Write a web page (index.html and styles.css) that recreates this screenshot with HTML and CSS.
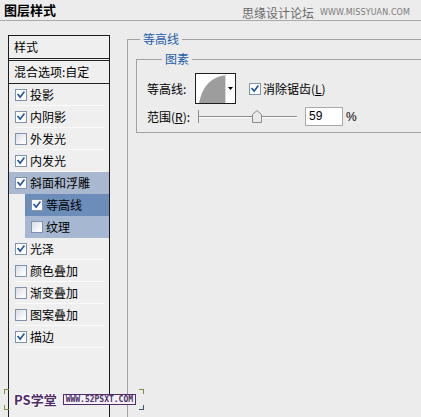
FILE: index.html
```html
<!DOCTYPE html>
<html lang="zh-CN">
<head>
<meta charset="utf-8">
<title>图层样式</title>
<link rel="stylesheet" href="styles.css">
</head>
<body>
<div class="window">
  <header class="titlebar">
    <h1 class="title">图层样式</h1>
    <div class="wm">思缘设计论坛<span class="wm-url">WWW.MISSYUAN.COM</span></div>
  </header>
  <div class="main">
    <aside class="panel">
      <div class="panel-head">样式</div>
      <div class="panel-blend">混合选项:自定</div>
      <ul class="items">
        <li class="item"><span class="cb on"><svg viewBox="0 0 12 12"><path d="M2.5 5.5 L5 8.5 L9.5 2.5"/></svg></span>投影</li>
        <li class="item"><span class="cb on"><svg viewBox="0 0 12 12"><path d="M2.5 5.5 L5 8.5 L9.5 2.5"/></svg></span>内阴影</li>
        <li class="item"><span class="cb"></span>外发光</li>
        <li class="item"><span class="cb on"><svg viewBox="0 0 12 12"><path d="M2.5 5.5 L5 8.5 L9.5 2.5"/></svg></span>内发光</li>
        <li class="item sel"><span class="cb on"><svg viewBox="0 0 12 12"><path d="M2.5 5.5 L5 8.5 L9.5 2.5"/></svg></span>斜面和浮雕</li>
        <li class="item sub active"><span class="cb on"><svg viewBox="0 0 12 12"><path d="M2.5 5.5 L5 8.5 L9.5 2.5"/></svg></span>等高线</li>
        <li class="item sub"><span class="cb"></span>纹理</li>
        <li class="item"><span class="cb on"><svg viewBox="0 0 12 12"><path d="M2.5 5.5 L5 8.5 L9.5 2.5"/></svg></span>光泽</li>
        <li class="item"><span class="cb"></span>颜色叠加</li>
        <li class="item"><span class="cb"></span>渐变叠加</li>
        <li class="item"><span class="cb"></span>图案叠加</li>
        <li class="item"><span class="cb on"><svg viewBox="0 0 12 12"><path d="M2.5 5.5 L5 8.5 L9.5 2.5"/></svg></span>描边</li>
      </ul>
    </aside>
    <section class="content">
      <fieldset class="group outer">
        <legend>等高线</legend>
        <fieldset class="group inner">
          <legend>图素</legend>
          <div class="row row-contour">
            <span class="label">等高线:</span>
            <span class="contour">
              <svg width="41" height="31" viewBox="0 0 41 31">
                <rect x="0.5" y="0.5" width="40" height="30" fill="#fff" stroke="#1e1e1e"/>
                <path d="M4 30 C 7 16, 13 6, 28 2.5 L 30 2.5 L 30 30 Z" fill="#9d9d9d"/>
                <line x1="30.5" y1="1" x2="30.5" y2="30" stroke="#d8d8d8"/>
                <path d="M33 14 L38 14 L35.5 17 Z" fill="#000"/>
              </svg>
            </span>
            <span class="cb on big"><svg viewBox="0 0 12 12"><path d="M2.5 5.5 L5 8.5 L9.5 2.5"/></svg></span>
            <span class="aa">消除锯齿(<u>L</u>)</span>
          </div>
          <div class="row row-range">
            <span class="label">范围(<u>R</u>):</span>
            <div class="track">
              <span class="thumb"><svg width="10" height="13" viewBox="0 0 10 13"><path d="M0.5 12.5 V4.5 L5 0.5 L9.5 4.5 V12.5 Z" fill="#ebebeb" stroke="#8a8a8a"/></svg></span>
            </div>
            <span class="num">59</span>
            <span class="pct">%</span>
          </div>
        </fieldset>
      </fieldset>
    </section>
  </div>
  <div class="foot-wm"><span class="ps">PS学堂</span><span class="ps-url">WWW.52PSXT.COM</span></div>
  <span class="mark mark-a"></span>
  <span class="mark mark-b"></span>
  <span class="mark mark-c"></span>
  <span class="mark mark-d"></span>
</div>
</body>
</html>
```
FILE: styles.css
```css
* { box-sizing: border-box; }
html, body { margin: 0; padding: 0; }
body {
  background: #ececec;
  font-family: "Noto Sans CJK SC", "Noto Sans", sans-serif;
  font-size: 12px;
  color: #000;
  width: 421px;
  height: 417px;
  overflow: hidden;
}
.window { position: relative; width: 421px; height: 417px; overflow: hidden; }

.titlebar {
  height: 21px;
  border-bottom: 1px solid #a9a9a9;
  display: flex;
  justify-content: space-between;
  align-items: flex-start;
  padding: 0 11px 0 4px;
}
.title {
  margin: 2px 0 0;
  font-size: 13px;
  line-height: 15px;
  font-weight: bold;
}
.wm {
  margin-top: 6px;
  color: #6a6a6a;
  font-size: 12px;
  line-height: 14px;
  display: flex;
  align-items: center;
  gap: 6px;
}
.wm-url {
  font-family: "DejaVu Sans", sans-serif;
  font-size: 8px;
  color: #7a7a7a;
  letter-spacing: 0.1px;
}

.main { display: flex; align-items: flex-start; padding-left: 8px; }

.panel {
  width: 102px;
  height: 420px;
  margin-top: 14px;
  border: 1px solid #1c1c1c;
  background: #efefef;
  flex: none;
}
.panel-head {
  height: 25px;
  line-height: 22px;
  padding-left: 5px;
  border-bottom: 3px double #222;
}
.panel-blend {
  height: 23px;
  line-height: 22px;
  padding-left: 5px;
  border-bottom: 1px solid #222;
}
.items { list-style: none; margin: 0; padding: 0; }
.item {
  position: relative;
  height: 22px;
  display: flex;
  align-items: center;
  gap: 3px;
  padding-left: 6px;
  line-height: 14px;
}
.item::after {
  content: "";
  position: absolute;
  left: 6px;
  right: 4px;
  bottom: 0;
  height: 1px;
  background: #fbfbfb;
}
.item.sel { background: #a9b8ce; }
.item.sub { margin-left: 16px; background: #a6b8d1; }
.item.sub.active { background: #6c8cba; }
.item.sel::after, .item.sub::after { display: none; }

.cb {
  width: 12px;
  height: 12px;
  flex: none;
  border: 1px solid #7f93ad;
  background: linear-gradient(135deg, #d9dde4 0%, #f7f8fa 70%, #ffffff 100%);
  display: inline-block;
}
.cb svg { display: block; width: 10px; height: 10px; }
.cb svg path { fill: none; stroke: #2a5aa5; stroke-width: 2; stroke-linecap: square; }
.cb.on { background: #fff; }

.content { flex: 1; margin-left: 17px; margin-top: 11px; margin-right: -14px; }
.group {
  margin: 0;
  padding: 0;
  min-width: 0;
  border: 1px solid #a3a3a3;
}
.group > legend {
  color: #1d5ea8;
  font-size: 12px;
  line-height: 14px;
  padding: 0 3px;
  margin-left: 12px;
}
.outer { height: 420px; }
.inner {
  margin: 6px 0 0 8px;
  height: 81px;
  padding: 0 0 0 10px;
}
.inner > legend { margin-left: 15px; }

.row { display: flex; align-items: center; }
.row-contour { margin-top: 7px; height: 31px; }
.row-contour .label { width: 48px; }
.contour { width: 41px; height: 31px; flex: none; }
.contour svg { display: block; }
.cb.big { margin-left: 13px; margin-right: 2px; }
.aa { line-height: 14px; }
u { text-decoration: underline; }

.row-range { margin-top: 3px; height: 19px; }
.row-range .label { width: 51px; }
.track {
  position: relative;
  width: 99px;
  height: 13px;
  background: linear-gradient(#0000 6px, #8c8c8c 6px, #8c8c8c 7px, #fff 7px, #fff 8px, #0000 8px);
  border-left: 1px solid #8c8c8c;
  flex: none;
}
.thumb { position: absolute; left: 53px; top: 0; }
.thumb svg { display: block; }
.num {
  margin-left: 8px;
  width: 38px;
  height: 19px;
  border: 1px solid #a9a9a9;
  background: #fff;
  padding-left: 3px;
  line-height: 17px;
  font-family: "Liberation Sans", sans-serif;
  font-size: 12px;
}
.pct { margin-left: 3px; font-family: "Liberation Sans", sans-serif; }

.foot-wm {
  position: absolute;
  left: 14px;
  top: 392px;
  display: flex;
  align-items: center;
  gap: 6px;
}
.ps {
  font-size: 13px;
  line-height: 15px;
  font-weight: bold;
  color: #4e2d69;
  text-shadow: 1px 0 #fff, -1px 0 #fff, 0 1px #fff, 0 -1px #fff;
}
.ps-url {
  font-family: "DejaVu Sans Mono", monospace;
  font-size: 8px;
  line-height: 9px;
  font-weight: bold;
  color: #4e2d69;
  background: #f4f0f6;
  border: 1px solid #4e2d69;
  padding: 0 2px;
}
.mark {
  position: absolute;
  width: 5px;
  height: 5px;
  border: 1px solid #7f8f3a;
}
.mark-a { left: 4px; top: 389px; border-right: 0; border-bottom: 0; }
.mark-b { left: 4px; top: 405px; border-right: 0; border-top: 0; }
.mark-c { left: 139px; top: 389px; border-left: 0; border-bottom: 0; }
.mark-d { left: 139px; top: 405px; border-left: 0; border-top: 0; border-color: #445577; }
```
